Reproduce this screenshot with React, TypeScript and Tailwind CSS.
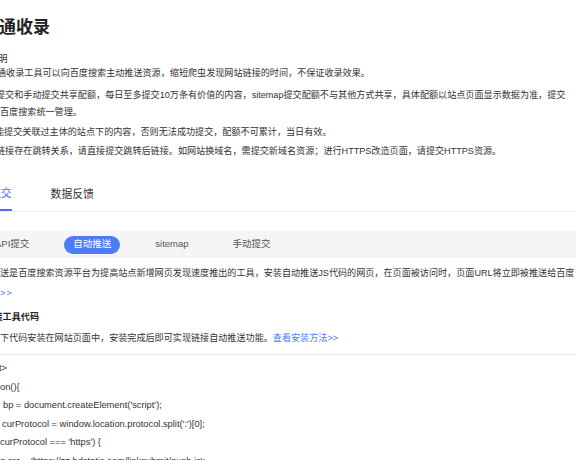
import React from 'react'

const codeLines = [
  { text: 't>', cls: '-ml-[1px]' },
  { text: 'on(){', cls: '' },
  { text: "bp = document.createElement('script');", cls: 'ml-[3px]' },
  { text: "curProtocol = window.location.protocol.split(':')[0];", cls: 'ml-[2px]' },
  { text: "curProtocol === 'https') {", cls: '' },
  { text: "bp.src = 'https://zz.bdstatic.com/linksubmit/push.js';", cls: '-ml-[5px]' },
]

export default function App() {
  return (
    <div className="w-[576px] h-[460px] overflow-hidden bg-white text-[#333] font-['Liberation_Sans','Noto_Sans_CJK_SC',sans-serif]">
      {/* 标题 */}
      <h1 className="pt-[16px] -ml-[1px] text-[17px] leading-[24px] font-bold text-[#222] whitespace-nowrap">通收录</h1>

      {/* 使用说明 */}
      <div className="mt-[12px] h-[13px] -ml-[2px] text-[9.5px] leading-[13px] whitespace-nowrap">明</div>
      <div className="text-[9.1px] whitespace-nowrap">
        <p className="h-[17px] leading-[17px] -ml-[3px]">通收录工具可以向百度搜索主动推送资源，缩短爬虫发现网站链接的时间，不保证收录效果。</p>
        <p className="mt-[5px] h-[17px] leading-[17px] -ml-[4px]">
          提交和手动提交共享配额，每日至多提交10万条有价值的内容，sitemap提交配额不与其他方式共享，具体配额以站点页面显示数据为准，提交
        </p>
        <p className="h-[17px] leading-[17px]">百度搜索统一管理。</p>
        <p className="mt-[3px] h-[17px] leading-[17px] -ml-[5px]">能提交关联过主体的站点下的内容，否则无法成功提交，配额不可累计，当日有效。</p>
        <p className="mt-[2px] h-[17px] leading-[17px] -ml-[4px]">
          链接存在跳转关系，请直接提交跳转后链接。如网站换域名，需提交新域名资源；进行HTTPS改造页面，请提交HTTPS资源。
        </p>
      </div>

      {/* 主标签 */}
      <div className="mt-[17px] flex gap-[39px] border-b border-[#eeeeee] text-[10.8px] whitespace-nowrap">
        <div className="-ml-[10px] h-[34px] flex items-center border-b-2 border-[#4e6ef2] -mb-px text-[#4e6ef2]">提交</div>
        <div className="h-[34px] flex items-center text-[#333]">数据反馈</div>
      </div>

      {/* 子标签 */}
      <div className="mt-[19px] h-[27px] bg-[#f5f5f6] flex items-center">
        <div className="-ml-[14px] flex items-center gap-[26px] text-[9.5px] text-[#555] whitespace-nowrap">
          <span className="h-[18px] px-[9px] flex items-center rounded-full">API提交</span>
          <span className="h-[18px] px-[9px] flex items-center rounded-full bg-[#4d7cf6] text-white">自动推送</span>
          <span className="h-[18px] px-[9px] flex items-center rounded-full">sitemap</span>
          <span className="h-[18px] px-[9px] flex items-center rounded-full">手动提交</span>
        </div>
      </div>

      {/* 说明段落 */}
      <div className="text-[9.1px] whitespace-nowrap">
        <p className="mt-[6px] h-[18px] leading-[18px]">
          送是百度搜索资源平台为提高站点新增网页发现速度推出的工具，安装自动推送JS代码的网页，在页面被访问时，页面URL将立即被推送给百度
        </p>
        <p className="mt-[2px] h-[18px] leading-[18px] text-[#4e7cf2] tracking-[1px]">&gt;&gt;</p>
        <p className="mt-[6px] h-[18px] leading-[18px] -ml-[6.5px] font-bold text-[#222]">装工具代码</p>
        <p className="mt-[3px] h-[18px] leading-[18px]">
          下代码安装在网站页面中，安装完成后即可实现链接自动推送功能。
          <span className="text-[#4e7cf2]">查看安装方法&gt;&gt;</span>
        </p>
      </div>

      <div className="mt-[7px] h-px bg-[#e8e8e8]" />

      {/* 代码 */}
      <div className="mt-[4px] text-[9.3px] text-[#333] whitespace-nowrap">
        {codeLines.map((l, i) => (
          <div key={i} className={`h-[18.5px] leading-[18.5px] ${l.cls}`}>
            {l.text}
          </div>
        ))}
      </div>
    </div>
  )
}
